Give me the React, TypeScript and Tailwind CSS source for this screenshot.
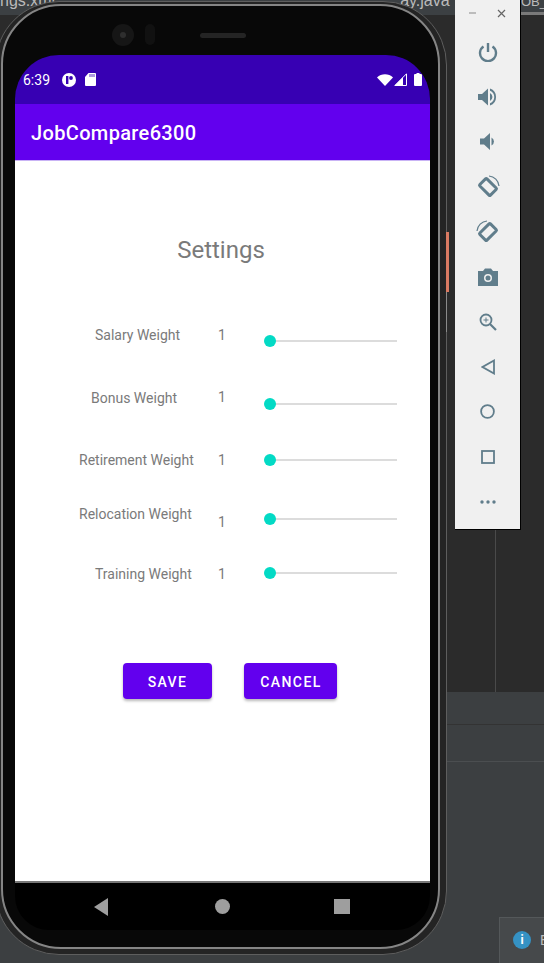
import React from 'react';

const roboto = "font-['Roboto',sans-serif]";

function SliderRow({ label, rowClass, labelClass, valueClass, sliderClass }: {
  label: string;
  rowClass: string;
  labelClass: string;
  valueClass: string;
  sliderClass: string;
}) {
  return (
    <div className={`flex items-start text-[14px] leading-5 text-[#7a7a7a] ${rowClass}`}>
      <div className={`w-[203px] shrink-0 ${labelClass}`}>{label}</div>
      <div className={`w-[52px] shrink-0 ${valueClass}`}>1</div>
      <div className={`relative h-3 w-[127px] flex items-center ${sliderClass}`}>
        <div className="h-[2px] w-full bg-[#dcdcdc]" />
        <div className="absolute -left-[6px] top-0 h-3 w-3 rounded-full bg-[#03dac5]" />
      </div>
    </div>
  );
}

function StatusBar() {
  return (
    <div className="flex h-[49px] items-center justify-between bg-[#3700b3] pl-2 pr-[8px] text-white">
      <div className="flex items-center">
        <span className="text-[14px] leading-5">6:39</span>
        <svg className="ml-[12px]" width="14" height="14" viewBox="0 0 14 14">
          <circle cx="7" cy="7" r="7" fill="#fff" />
          <rect x="4" y="3" width="2.4" height="8" fill="#3700b3" />
          <circle cx="9" cy="5" r="1.9" fill="#3700b3" />
        </svg>
        <svg className="ml-[9px]" width="11" height="13" viewBox="0 0 11 13">
          <path d="M3.5 0H10a1 1 0 0 1 1 1v11a1 1 0 0 1-1 1H1a1 1 0 0 1-1-1V4z" fill="#fff" />
          <path d="M5 1v3M7 1v3M9 1v3" stroke="#3700b3" strokeWidth="0.8" />
        </svg>
      </div>
      <div className="flex items-center">
        <svg width="16" height="12" viewBox="0 0 16 12">
          <path d="M0 3.5C4.300-.8 11.700-.8 16 3.500L8 12z" fill="#fff" />
        </svg>
        <svg className="ml-[1px]" width="13" height="13" viewBox="0 0 13 13">
          <path d="M12.5.8V12.5H.8z" fill="none" stroke="#fff" />
          <path d="M9 4.3V12.5H.8z" fill="#fff" />
        </svg>
        <svg className="ml-[7px]" width="8" height="13" viewBox="0 0 8 13">
          <path d="M2.5 0h3v1H7a1 1 0 0 1 1 1v10a1 1 0 0 1-1 1H1a1 1 0 0 1-1-1V2a1 1 0 0 1 1-1h1.500z" fill="#fff" />
        </svg>
      </div>
    </div>
  );
}

function Screen() {
  return (
    <div className={`flex flex-col ${roboto}`}>
      <div className="overflow-hidden rounded-t-[44px]">
        <StatusBar />
        <div className="flex h-[56px] items-center bg-[#6200ee] pl-4 pt-[2px] text-[20px] font-medium tracking-[0.35px] text-white">JobCompare6300</div>
      </div>
      <div className="h-[723px] border-t border-[#c9b3f5] border-b-2 border-b-[#777] bg-white">
        <div className="pt-[73px] text-center text-[24px] leading-8 text-[#7a7a7a] pr-[3px]">Settings</div>
        <div className="mt-[59px]">
          <SliderRow label="Salary Weight" rowClass="h-[63px]" labelClass="pl-[80px]" valueClass="" sliderClass="mt-[10px]" />
          <SliderRow label="Bonus Weight" rowClass="h-[62px]" labelClass="pl-[76px]" valueClass="-mt-[1px]" sliderClass="mt-[10px]" />
          <SliderRow label="Retirement Weight" rowClass="h-[54px]" labelClass="pl-[64px]" valueClass="" sliderClass="mt-[4px]" />
          <SliderRow label="Relocation Weight" rowClass="h-[60px]" labelClass="pl-[64px]" valueClass="mt-[8px]" sliderClass="mt-[9px]" />
          <SliderRow label="Training Weight" rowClass="h-[99px]" labelClass="pl-[80px]" valueClass="" sliderClass="mt-[3px]" />
        </div>
        <div className="flex gap-8 pl-[108px] text-[14px] font-medium tracking-[1.4px] text-white">
          <button className="h-9 w-[89px] rounded bg-[#6200ee] pt-[2px] shadow-[0_2px_3px_rgba(0,0,0,0.28)]">SAVE</button>
          <button className="h-9 w-[93px] rounded bg-[#6200ee] pt-[2px] pl-[1px] shadow-[0_2px_3px_rgba(0,0,0,0.28)]">CANCEL</button>
        </div>
      </div>
      <div className="flex h-[47px] items-center rounded-b-[34px] bg-black pl-[79px]">
        <svg width="14" height="18" viewBox="0 0 14 18"><path d="M14 0v18L0 9z" fill="#9e9e9e" /></svg>
        <div className="ml-[107px] h-[15px] w-[15px] rounded-full bg-[#9e9e9e]" />
        <div className="ml-[104px] h-[15px] w-[16px] bg-[#9e9e9e]" />
      </div>
    </div>
  );
}

function Phone() {
  return (
    <div className="absolute -left-[5px] top-[1px] h-[954px] w-[452px] rounded-[64px] border border-[#5e5e5e] bg-[#242424] pb-[5px] pl-[5px] pr-[6px] pt-[2px]">
      <div className="flex h-full flex-col rounded-[60px] border-2 border-[#858585] bg-[#080808]">
        <div className="flex h-[49px] items-start pl-[109px] pt-[18px]">
          <div className="h-[22px] w-[22px] rounded-full bg-[#161616] flex items-center justify-center">
            <div className="h-[6px] w-[6px] rounded-full bg-[#2e2e2e]" />
          </div>
          <div className="ml-[11px] h-[21px] w-[10px] rounded-full bg-[#111]" />
          <div className="ml-[45px] mt-[9px] h-[5px] w-[46px] rounded-sm bg-[#242424]" />
        </div>
        <div className="pl-[12px] pr-[8px]">
          <Screen />
        </div>
      </div>
    </div>
  );
}

function ToolButton({ children }: { children: React.ReactNode }) {
  return <div className="flex h-[45px] items-center justify-center">{children}</div>;
}

function EmulatorPanel() {
  const c = '#607d8b';
  return (
    <div className="absolute left-[455px] top-0 h-[530px] w-[66px] border-b border-r border-black bg-[#f0f0f0]">
      <div className="flex h-[29px] items-center justify-between pb-[3px] pl-[14px] pr-[14px]">
        <svg width="8" height="8" viewBox="0 0 8 8"><path d="M0 4h7" stroke="#999" strokeWidth="1.2" /></svg>
        <svg width="9" height="9" viewBox="0 0 9 9"><path d="M1 1l7 7M8 1L1 8" stroke="#666" strokeWidth="1.2" /></svg>
      </div>
      <ToolButton>
        <svg width="20" height="20" viewBox="0 0 20 20" fill="none" stroke={c} strokeWidth="2.4">
          <path d="M10 1v9" />
          <path d="M5.500 4.500a8 8 0 1 0 9 0" />
        </svg>
      </ToolButton>
      <ToolButton>
        <svg width="19" height="18" viewBox="0 0 19 18">
          <path d="M0 6h4l6-5.500v17L4 12H0z" fill={c} />
          <path d="M12 5a4.500 4.500 0 0 1 0 8zM12 .5a9 9 0 0 1 0 17v-2.200a6.800 6.800 0 0 0 0-12.600z" fill={c} />
        </svg>
      </ToolButton>
      <ToolButton>
        <svg width="15" height="17" viewBox="0 0 15 17">
          <path d="M0 5.500h4L10 0v17l-6-5.500H0z" fill={c} />
          <path d="M11.500 4.500a4.500 4.500 0 0 1 0 8z" fill={c} />
        </svg>
      </ToolButton>
      <ToolButton>
        <svg width="24" height="24" viewBox="0 0 24 24" fill="none" stroke={c}>
          <rect x="7" y="4.500" width="10" height="15" rx="1" strokeWidth="3" transform="rotate(-45 12 12)" />
          <path d="M13 1a11 11 0 0 1 10 10" strokeWidth="1.200" />
        </svg>
      </ToolButton>
      <ToolButton>
        <svg width="24" height="24" viewBox="0 0 24 24" fill="none" stroke={c}>
          <rect x="7" y="4.500" width="10" height="15" rx="1" strokeWidth="3" transform="rotate(45 12 12)" />
          <path d="M1 11A11 11 0 0 1 11 1" strokeWidth="1.200" />
        </svg>
      </ToolButton>
      <ToolButton>
        <svg width="20" height="18" viewBox="0 0 20 18">
          <path fillRule="evenodd" d="M0 3h5l2-2.500h6L15 3h5v15H0zM10 6a4 4 0 1 0 0 8 4 4 0 0 0 0-8z" fill={c} />
          <circle cx="10" cy="10" r="2.500" fill={c} />
        </svg>
      </ToolButton>
      <ToolButton>
        <svg width="18" height="18" viewBox="0 0 18 18" fill="none" stroke={c}>
          <circle cx="7" cy="7" r="5.500" strokeWidth="1.800" />
          <path d="M11 11l6 6" strokeWidth="2.200" />
          <path d="M4.500 7h5M7 4.500v5" strokeWidth="1" />
        </svg>
      </ToolButton>
      <ToolButton>
        <svg width="14" height="16" viewBox="0 0 14 16" fill="none" stroke={c} strokeWidth="1.800">
          <path d="M13 1.500v13L1.500 8z" />
        </svg>
      </ToolButton>
      <ToolButton>
        <svg width="15" height="15" viewBox="0 0 15 15" fill="none" stroke={c} strokeWidth="1.800">
          <circle cx="7.500" cy="7.500" r="6.400" />
        </svg>
      </ToolButton>
      <ToolButton>
        <svg width="14" height="14" viewBox="0 0 14 14" fill="none" stroke={c} strokeWidth="1.800">
          <rect x="1" y="1" width="12" height="12" />
        </svg>
      </ToolButton>
      <ToolButton>
        <svg width="16" height="4" viewBox="0 0 16 4" fill={c}>
          <circle cx="2" cy="2" r="1.700" />
          <circle cx="8" cy="2" r="1.700" />
          <circle cx="14" cy="2" r="1.700" />
        </svg>
      </ToolButton>
    </div>
  );
}

function IdeBackground() {
  return (
    <div className="flex h-[963px] flex-col overflow-hidden font-['Liberation_Sans',sans-serif] text-[16px] leading-4 text-[#bbbbbb]">
      <div className="flex h-[15px] shrink-0 items-start overflow-hidden bg-[#3c4043]">
        <span className="-mt-[7px] whitespace-nowrap">ngs.xml</span>
        <span className="-mt-[7px] ml-[345px] whitespace-nowrap">ay.java</span>
        <span className="ml-auto h-[15px] w-[23px] overflow-hidden border-b-[3px] border-[#7a7a7a] whitespace-nowrap text-[13px]">
          <span className="-mt-[6px] block">OB_</span>
        </span>
      </div>
      <div className="flex h-[677px] shrink-0 bg-[#2b2b2b] pl-[495px]">
        <div className="h-full w-px bg-[#4a4a4a]" />
      </div>
      <div className="h-[33px] shrink-0 border-b border-[#333] bg-[#3c3f41]" />
      <div className="h-[37px] shrink-0 border-b border-[#4b4e50] bg-[#3c3f41]" />
      <div className="flex-1 bg-[#3c3f41]" />
    </div>
  );
}

export default function App() {
  return (
    <div className="relative h-[963px] w-[544px] overflow-hidden bg-[#3c3f41]">
      <IdeBackground />
      <Phone />
      <div className="absolute left-[446px] top-[232px] h-[60px] w-[3px] bg-[#d97a62]" />
      <div className="absolute left-[446px] top-[292px] h-[40px] w-px bg-[#8a8a8a]" />
      <EmulatorPanel />
      <div className="absolute left-[499px] top-[917px] flex h-[46px] w-[45px] items-center border-l border-t border-[#54585a] bg-[#46494b] pl-[13px] pb-[1px] font-['Liberation_Sans',sans-serif] text-[14px] text-[#bbbbbb]">
        <div className={`flex h-[18px] w-[18px] shrink-0 items-center justify-center rounded-full bg-[#3592c4] text-[12px] font-bold text-white ${roboto}`}>i</div>
        <span className="ml-[9px]">E</span>
      </div>
    </div>
  );
}
